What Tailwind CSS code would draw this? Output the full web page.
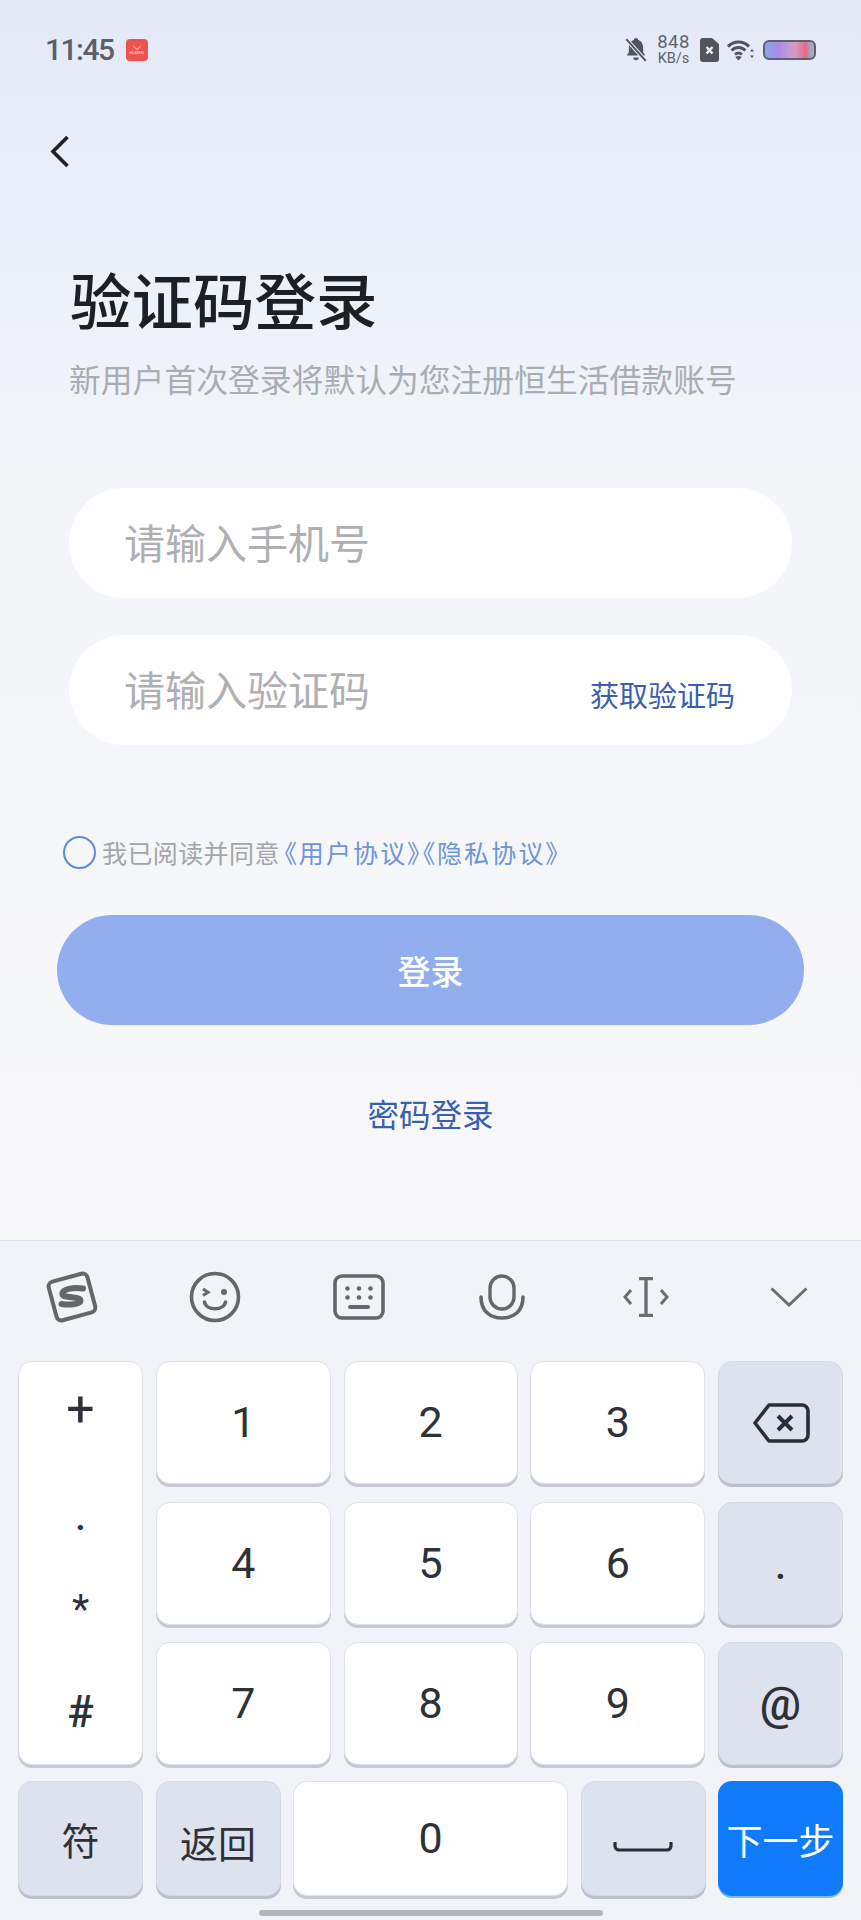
<!DOCTYPE html>
<html lang="zh-CN">
<head>
<meta charset="utf-8">
<script src="https://cdn.jsdelivr.net/npm/@tailwindcss/browser@4"></script>
</head>
<body class="m-0">
<div class="w-[861px] h-[1920px] overflow-hidden flex flex-col bg-[#f1f3f8] font-['Roboto','Noto_Sans_CJK_SC',sans-serif]">
  <!-- App area -->
  <div class="h-[1240px] shrink-0 flex flex-col bg-gradient-to-b from-[#e3e9f7] via-[#f3f5f9] via-38% to-[#f8f8fa]">
    <!-- Status bar -->
    <div class="h-[100px] shrink-0 flex items-center pl-[45px] pr-[45px]">
      <span class="text-[30px] font-medium leading-none text-[#5b5f67] tracking-[-1.500px]">11:45</span>
      <div class="ml-[12px] w-[22px] h-[22px] rounded-[4px] bg-[#ef5350] flex flex-col items-center justify-center">
        <svg width="12" height="6" viewBox="0 0 12 6" fill="none"><path d="M2 1l4 3.5L10 1" stroke="#fbd0cc" stroke-width="1"/></svg>
        <span class="text-[4px] leading-none text-[#fde0dd]">HUAWEI</span>
      </div>
      <div class="ml-auto flex items-center">
        <svg width="24" height="26" viewBox="0 0 22 24"><path d="M11 1c1 0 1.800.7 2 1.700 3 .9 4.600 3.600 4.600 6.800v4.500l2 3H2.400l2-3V9.500c0-3.200 1.600-5.900 4.600-6.800.2-1 1-1.700 2-1.700z" fill="#50545c"/><path d="M8.500 19h5a2.500 2.500 0 0 1-5 0z" fill="#50545c"/><path d="M2 2l18 20" stroke="#e6ebf7" stroke-width="3.600"/><path d="M2 2l18 20" stroke="#50545c" stroke-width="1.800"/></svg>
        <div class="ml-[10px] w-[31px] flex flex-col items-center text-[#5f636b]">
          <span class="text-[18.500px] leading-[17px] tracking-[0.5px]">848</span>
          <span class="text-[14.500px] leading-[15px]">KB/s</span>
        </div>
        <svg class="ml-[11px]" width="19" height="24" viewBox="0 0 19 24"><path d="M3 0h9l7 6v15a3 3 0 0 1-3 3H3a3 3 0 0 1-3-3V3a3 3 0 0 1 3-3z" fill="#50545c"/><path d="M6.500 9l6 6.500M12.500 9l-6 6.500" stroke="#f2f4fa" stroke-width="2.400"/></svg>
        <svg class="ml-[8px]" width="27" height="22" viewBox="0 0 27 22" fill="none"><path d="M1 7.500c6-6 15-6 21 0" stroke="#50545c" stroke-width="3.200"/><path d="M4.500 11.500c4.200-4 9.800-4 14 0" stroke="#50545c" stroke-width="3"/><path d="M8 15.500c2.300-2 4.700-2 7 0" stroke="#50545c" stroke-width="2.800"/><path d="M11.500 21.500l-3.200-3.500c2-1.200 4.400-1.200 6.400 0z" fill="#50545c"/><path d="M25 10l-2 2.500h4zM25 19l-2-2.500h4z" fill="#50545c"/></svg>
        <div class="ml-[9px] w-[53px] h-[20px] rounded-[6px] border-2 border-[#5c6070] bg-[linear-gradient(to_right,#8aa5e6_0%,#a98ae6_28%,#c79bcf_50%,#d59ac4_62%,#e5687f_84%,#a5a5c0_92%,#a5a8c8_100%)]"></div>
      </div>
    </div>
    <!-- Back -->
    <div class="mt-[35px] pl-[50px] h-[33px] shrink-0">
      <svg width="20" height="33" viewBox="0 0 20 33" fill="none"><path d="M17.500 2L3 16.500 17.500 31" stroke="#1d2026" stroke-width="3.600"/></svg>
    </div>
    <!-- Title -->
    <div class="mt-[100px] ml-[70px] h-[62px] flex items-center text-[61.500px] leading-none font-medium text-[#1c1f24] font-['Noto_Sans_CJK_SC',sans-serif]">验证码登录</div>
    <div class="mt-[31px] ml-[69px] h-[36px] flex items-center text-[31.800px] leading-none text-[#a9acb3] font-['Noto_Sans_CJK_SC',sans-serif]">新用户首次登录将默认为您注册恒生活借款账号</div>
    <!-- Inputs -->
    <div class="mt-[91px] mx-[69px] h-[110px] rounded-[55px] bg-white flex items-center pl-[55px] text-[41px] leading-none text-[#b0b0b2] font-['Noto_Sans_CJK_SC',sans-serif]"><span class="mb-[4px]">请输入手机号</span></div>
    <div class="mt-[37px] mx-[69px] h-[110px] rounded-[55px] bg-white flex items-center pl-[55px] pr-[57px] justify-between text-[41px] leading-none text-[#b0b0b2] font-['Noto_Sans_CJK_SC',sans-serif]">
      <span class="mb-[3px]">请输入验证码</span>
      <span class="text-[29px] text-[#3a5faf] mt-[8px]">获取验证码</span>
    </div>
    <!-- Agreement -->
    <div class="mt-[90px] ml-[63px] h-[34px] flex items-center font-['Noto_Sans_CJK_SC',sans-serif] text-[25px] leading-none [font-feature-settings:'palt']">
      <span class="w-[33px] h-[33px] rounded-full border-2 border-[#5f8bd6] shrink-0"></span>
      <span class="ml-[6px] text-[#a3a5ab] w-[182px] tracking-[0.4px]">我已阅读并同意</span>
      <span class="text-[#6e94dd] tracking-[2.200px]">《用户协议》《隐私协议》</span>
    </div>
    <!-- Button -->
    <div class="mt-[46px] mx-[57px] h-[110px] rounded-[55px] bg-[#92aeef] flex items-center justify-center text-[33px] font-medium leading-none text-white font-['Noto_Sans_CJK_SC',sans-serif]">登录</div>
    <div class="mt-[69px] h-[40px] flex items-center justify-center text-[31.500px] leading-none text-[#3a5faf] font-['Noto_Sans_CJK_SC',sans-serif]">密码登录</div>
  </div>

  <!-- Keyboard -->
  <div class="flex-1 flex flex-col border-t border-[#e1e5ec] bg-[#f1f3f8]">
    <!-- Toolbar -->
    <div class="h-[120px] pb-[8px] shrink-0 grid grid-cols-6 items-center justify-items-center">
      <svg width="54" height="54" viewBox="0 0 54 54" fill="none"><rect x="7" y="7" width="40" height="40" rx="5" transform="rotate(-15 27 27)" stroke="#63666c" stroke-width="4"/><path d="M38 18.500C29 17 16 19 17.500 24.500c1 4 17.500 1.500 18 6 .3 3.500-10 5-19 3.500" stroke="#63666c" stroke-width="6" stroke-linecap="round"/></svg>
      <svg width="52" height="52" viewBox="0 0 52 52" fill="none"><circle cx="26" cy="26" r="23.500" stroke="#63666c" stroke-width="3.600"/><path d="M14 18l5 3.200-5 3.200" stroke="#63666c" stroke-width="3"/><circle cx="35" cy="21" r="3" fill="#63666c"/><path d="M15.500 31c1.500 9 19.500 9 21 0" stroke="#63666c" stroke-width="3.600" stroke-linecap="round"/></svg>
      <svg width="52" height="46" viewBox="0 0 52 46" fill="none"><rect x="2" y="2" width="48" height="42" rx="7" stroke="#63666c" stroke-width="3.600"/><g fill="#63666c"><circle cx="14.500" cy="14.500" r="2.300"/><circle cx="26" cy="14.500" r="2.300"/><circle cx="37.500" cy="14.500" r="2.300"/><circle cx="14.500" cy="23.500" r="2.300"/><circle cx="26" cy="23.500" r="2.300"/><circle cx="37.500" cy="23.500" r="2.300"/></g><path d="M17 33h18" stroke="#63666c" stroke-width="4" stroke-linecap="round"/></svg>
      <svg width="46" height="46" viewBox="0 0 46 46" fill="none"><rect x="11" y="2" width="24" height="33" rx="12" stroke="#63666c" stroke-width="3.400"/><path d="M2 23c0 14 9 21 21 21s21-7 21-21" stroke="#63666c" stroke-width="3.600" stroke-linecap="round"/></svg>
      <svg width="46" height="40" viewBox="0 0 46 40" fill="none"><path d="M16 1.500h14M16 38.500h14M23 1.500v37" stroke="#6a6d73" stroke-width="3.400"/><path d="M8 13l-6 7 6 7M38 13l6 7-6 7" stroke="#6a6d73" stroke-width="3"/></svg>
      <svg width="38" height="20" viewBox="0 0 38 20" fill="none"><path d="M1.500 1.500L19 18 36.500 1.500" stroke="#6a6d73" stroke-width="3"/></svg>
    </div>
    <!-- Keys -->
    <div class="grid grid-cols-[125px_175px_174px_175px_125px] grid-rows-[123px_123px_123px] gap-x-[12.750px] gap-y-[17.500px] ml-[18px] text-[43px] leading-none text-[#2e3137]">
      <div class="row-span-3 h-[404px] rounded-[14px] bg-white border border-[#dfe1e8] shadow-[0_3px_0_#c6c9d3] flex flex-col items-center text-[44px]">
        <span class="mt-[25px] h-[44px] flex items-center text-[50px]">+</span>
        <span class="mt-[64px] h-[44px] flex items-center text-[38px] font-medium">.</span>
        <span class="mt-[49px] h-[44px] flex items-center text-[40px]">*</span>
        <span class="mt-[58px] h-[44px] flex items-center font-medium">#</span>
      </div>
      <div class="rounded-[14px] bg-white border border-[#dfe1e8] shadow-[0_3px_0_#c6c9d3] flex items-center justify-center">1</div>
      <div class="rounded-[14px] bg-white border border-[#dfe1e8] shadow-[0_3px_0_#c6c9d3] flex items-center justify-center">2</div>
      <div class="rounded-[14px] bg-white border border-[#dfe1e8] shadow-[0_3px_0_#c6c9d3] flex items-center justify-center">3</div>
      <div class="rounded-[14px] bg-[#dde2ee] border border-[#d5d9e4] shadow-[0_3px_0_#bcc0cc] flex items-center justify-center">
        <svg width="58" height="40" viewBox="0 0 58 40" fill="none"><path d="M17 2h33a6 6 0 0 1 6 6v24a6 6 0 0 1-6 6H17L3 20z" stroke="#2b2e34" stroke-width="3.600" stroke-linejoin="round"/><path d="M26 13l14 14M40 13L26 27" stroke="#2b2e34" stroke-width="4"/></svg>
      </div>
      <div class="rounded-[14px] bg-white border border-[#dfe1e8] shadow-[0_3px_0_#c6c9d3] flex items-center justify-center">4</div>
      <div class="rounded-[14px] bg-white border border-[#dfe1e8] shadow-[0_3px_0_#c6c9d3] flex items-center justify-center">5</div>
      <div class="rounded-[14px] bg-white border border-[#dfe1e8] shadow-[0_3px_0_#c6c9d3] flex items-center justify-center">6</div>
      <div class="rounded-[14px] bg-[#dde2ee] border border-[#d5d9e4] shadow-[0_3px_0_#bcc0cc] flex items-center justify-center text-[40px] font-medium pt-[6px]">.</div>
      <div class="rounded-[14px] bg-white border border-[#dfe1e8] shadow-[0_3px_0_#c6c9d3] flex items-center justify-center">7</div>
      <div class="rounded-[14px] bg-white border border-[#dfe1e8] shadow-[0_3px_0_#c6c9d3] flex items-center justify-center">8</div>
      <div class="rounded-[14px] bg-white border border-[#dfe1e8] shadow-[0_3px_0_#c6c9d3] flex items-center justify-center">9</div>
      <div class="rounded-[14px] bg-[#dde2ee] border border-[#d5d9e4] shadow-[0_3px_0_#bcc0cc] flex items-center justify-center text-[46px] font-medium">@</div>
    </div>
    <div class="mt-[16px] ml-[18px] flex gap-x-[12.500px] h-[115px] text-[38px] leading-none text-[#2e3137]">
      <div class="w-[125px] rounded-[14px] bg-[#dde2ee] border border-[#d5d9e4] shadow-[0_3px_0_#bcc0cc] flex items-center justify-center font-['Noto_Sans_CJK_SC',sans-serif]">符</div>
      <div class="w-[125px] rounded-[14px] bg-[#dde2ee] border border-[#d5d9e4] shadow-[0_3px_0_#bcc0cc] flex items-center justify-center pt-[6px] font-['Noto_Sans_CJK_SC',sans-serif]">返回</div>
      <div class="w-[275px] rounded-[14px] bg-white border border-[#dfe1e8] shadow-[0_3px_0_#c6c9d3] flex items-center justify-center text-[43px]">0</div>
      <div class="w-[125px] rounded-[14px] bg-[#dde2ee] border border-[#d5d9e4] shadow-[0_3px_0_#bcc0cc] flex items-center justify-center pt-[16px]">
        <svg width="60" height="10" viewBox="0 0 60 10" fill="none"><path d="M2 1v3a4 4 0 0 0 4 4h48a4 4 0 0 0 4-4V1" stroke="#2b2e34" stroke-width="3.200" stroke-linecap="round"/></svg>
      </div>
      <div class="w-[125px] rounded-[14px] bg-[#0f7bfb] shadow-[0_2px_0_#7db6fb] flex items-center justify-center text-[36px] text-white font-['Noto_Sans_CJK_SC',sans-serif]">下一步</div>
    </div>
    <div class="mt-[14px] mx-auto w-[344px] h-[6px] rounded-full bg-[#b4b5b9]"></div>
  </div>
</div>
</body>
</html>
